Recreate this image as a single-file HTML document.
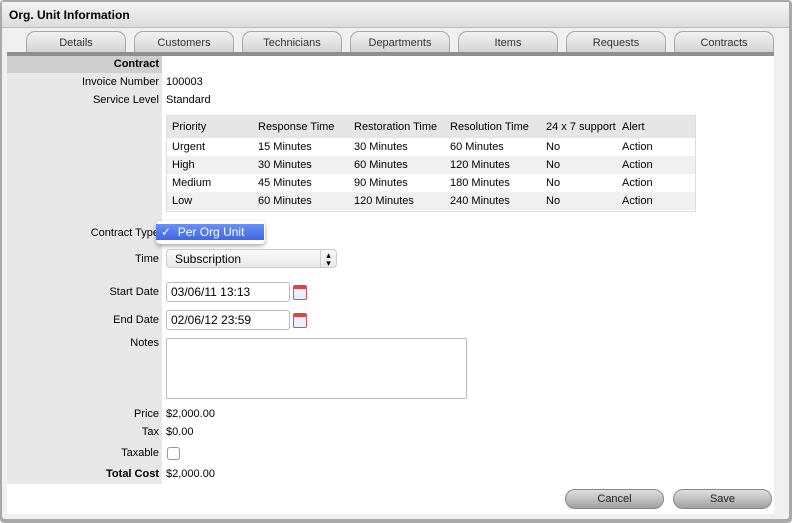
<!DOCTYPE html>
<html><head><style>
*{margin:0;padding:0;box-sizing:border-box}
body{width:792px;height:523px;background:#fff;font-family:"Liberation Sans",sans-serif;font-size:11px;color:#000;position:relative;overflow:hidden}
.a{position:absolute}
.frame{left:0;top:0;width:792px;height:523px;background:#a9a9a9;border-radius:4px}
.inner{left:2px;top:2px;width:787px;height:517px;background:#f0f0f0;border-radius:3px}
.title{left:2px;top:2px;width:787px;height:26px;background:linear-gradient(#f4f4f4,#dcdcdc);border-bottom:1px solid #bdbdbd;font-weight:bold;font-size:12px;padding:6px 7px}
.tab{top:31px;height:22px;width:100px;border:1px solid #a8a8a8;border-bottom:none;border-radius:9px 9px 0 0;background:linear-gradient(#f2f2f2,#d3d3d3);text-align:center;padding-top:5px;color:#333}
.bar{left:7px;top:52px;width:767px;height:4px;background:#8f8f8f}
.left{left:7px;top:56px;width:155px;height:428px;background:#e8e8e8}
.main{left:162px;top:56px;width:612px;height:428px;background:#fff}
.foot{left:7px;top:484px;width:767px;height:30px;background:#fff}
.lbl{right:633px;text-align:right}
.val{left:166px}
table{border-collapse:collapse;font-size:11px;table-layout:fixed}
td{height:18px;padding:0 0 0 5px;white-space:nowrap;overflow:hidden}
.inp{border:1px solid #bbb;border-radius:3px;background:#fff;font-size:12px;padding:2px 4px;height:20px}
.cal{width:14px;height:15px;border:1px solid #c55;border-top:4px solid #d44;background:#eef;border-radius:2px}
.btn{top:489px;width:99px;height:20px;border-radius:10px;border:1px solid #888;background:linear-gradient(#e0e0e0,#a0a0a0);text-align:center;padding-top:3px;color:#222}
</style></head><body>
<div class="a frame"></div><div class="a inner"></div>
<div class="a title">Org. Unit Information</div>
<div class="a tab" style="left:26px">Details</div>
<div class="a tab" style="left:134px">Customers</div>
<div class="a tab" style="left:242px">Technicians</div>
<div class="a tab" style="left:350px">Departments</div>
<div class="a tab" style="left:458px">Items</div>
<div class="a tab" style="left:566px">Requests</div>
<div class="a tab" style="left:674px">Contracts</div>
<div class="a bar"></div>
<div class="a main"></div><div class="a left"></div><div class="a foot"></div>
<div class="a" style="left:7px;top:56px;width:155px;height:17px;background:#cfcfcf"></div>
<div class="a lbl" style="top:58px;font-weight:bold">Contract</div>
<div class="a lbl" style="top:76px">Invoice Number</div><div class="a val" style="top:76px">100003</div>
<div class="a lbl" style="top:94px">Service Level</div><div class="a val" style="top:94px">Standard</div>
<div class="a" style="left:166px;top:115px;width:530px;height:97px;border:1px solid #ddd;background:#fff">
<table style="width:528px">
<colgroup><col style="width:86px"><col style="width:96px"><col style="width:96px"><col style="width:96px"><col style="width:76px"><col></colgroup>
<tr style="background:#e6e6e6;height:22px"><td style="height:22px">Priority</td><td>Response Time</td><td>Restoration Time</td><td>Resolution Time</td><td>24 x 7 support</td><td>Alert</td></tr>
<tr><td>Urgent</td><td>15 Minutes</td><td>30 Minutes</td><td>60 Minutes</td><td>No</td><td>Action</td></tr>
<tr style="background:#f0f0f0"><td>High</td><td>30 Minutes</td><td>60 Minutes</td><td>120 Minutes</td><td>No</td><td>Action</td></tr>
<tr><td>Medium</td><td>45 Minutes</td><td>90 Minutes</td><td>180 Minutes</td><td>No</td><td>Action</td></tr>
<tr style="background:#f0f0f0"><td>Low</td><td>60 Minutes</td><td>120 Minutes</td><td>240 Minutes</td><td>No</td><td>Action</td></tr>
</table></div>
<div class="a lbl" style="top:227px">Contract Type</div>
<div class="a" style="left:156px;top:221px;width:109px;height:23px;background:#fff;border-radius:4px;box-shadow:0 2px 5px rgba(0,0,0,.35)"></div>
<div class="a" style="left:156px;top:224px;width:108px;height:16px;background:linear-gradient(#6a8ff5,#3d67e8);color:#fff;font-size:12px;padding:1px 0 0 5px">✓ &nbsp;Per Org Unit</div>
<div class="a lbl" style="top:253px">Time</div>
<div class="a" style="left:166px;top:249px;width:171px;height:19px;border:1px solid #ccc;border-radius:4px;background:linear-gradient(#fafafa,#e8e8e8);font-size:12px;padding:2px 8px">Subscription<span style="position:absolute;right:0;top:0;width:16px;height:17px;border-left:1px solid #ccc;font-size:9px;text-align:center;line-height:8px;padding-top:1px">▴<br>▾</span></div>
<div class="a lbl" style="top:286px">Start Date</div>
<div class="a inp" style="left:166px;top:282px;width:124px">03/06/11 13:13</div>
<div class="a cal" style="left:293px;top:285px"></div>
<div class="a lbl" style="top:314px">End Date</div>
<div class="a inp" style="left:166px;top:310px;width:124px">02/06/12 23:59</div>
<div class="a cal" style="left:293px;top:313px"></div>
<div class="a lbl" style="top:337px">Notes</div>
<div class="a" style="left:166px;top:338px;width:301px;height:61px;border:1px solid #bbb;border-radius:2px"></div>
<div class="a lbl" style="top:408px">Price</div><div class="a val" style="top:408px">$2,000.00</div>
<div class="a lbl" style="top:426px">Tax</div><div class="a val" style="top:426px">$0.00</div>
<div class="a lbl" style="top:447px">Taxable</div>
<div class="a" style="left:167px;top:447px;width:13px;height:13px;border:1px solid #999;border-radius:3px;background:#fff"></div>
<div class="a lbl" style="top:468px;font-weight:bold">Total Cost</div><div class="a val" style="top:468px">$2,000.00</div>
<div class="a btn" style="left:565px">Cancel</div>
<div class="a btn" style="left:673px">Save</div>
</body></html>
